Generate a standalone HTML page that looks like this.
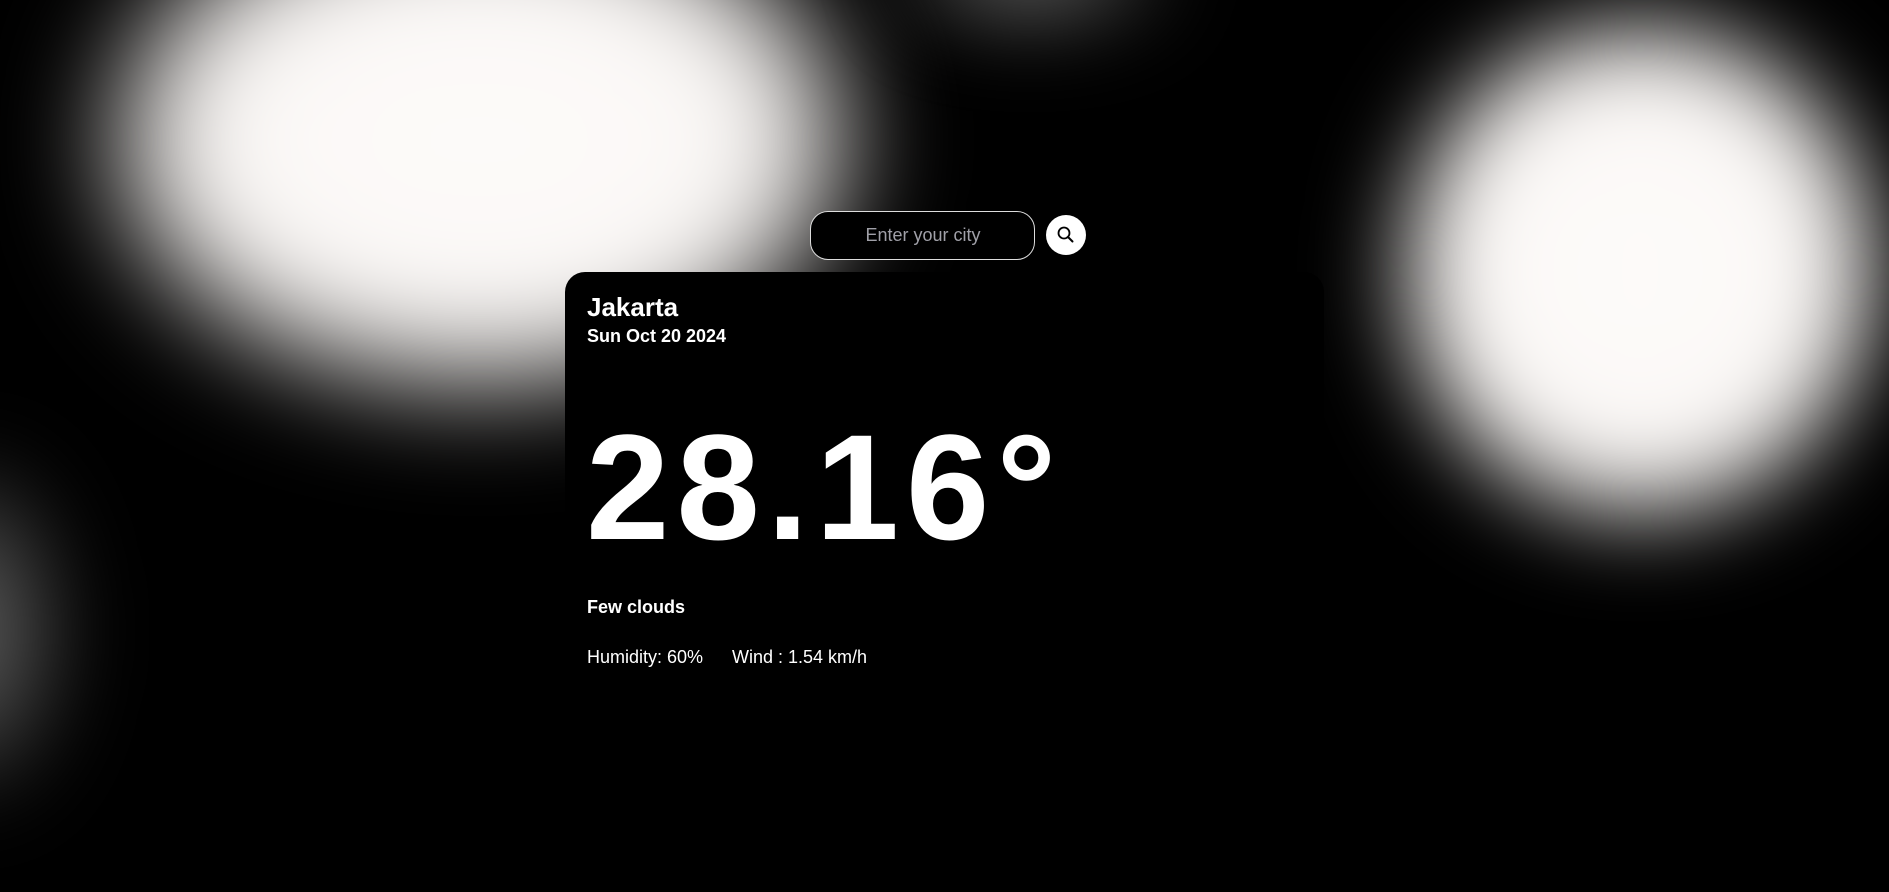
<!DOCTYPE html>
<html><head><meta charset="utf-8">
<style>
html,body{margin:0;padding:0;width:1889px;height:865px;overflow:hidden;background:#000;font-family:"Liberation Sans",sans-serif;color:#fff}
.blob{position:absolute;border-radius:50%}
.t{position:absolute;white-space:nowrap;line-height:1}
</style></head><body>
<div class="blob" style="left:110px;top:-110px;width:740px;height:500px;filter:blur(55px);background:radial-gradient(ellipse at center,#fdfbfa 0%,#fbf8f6 55%,rgba(255,255,255,0) 100%)"></div>
<div class="blob" style="left:1400px;top:20px;width:480px;height:500px;filter:blur(45px);background:radial-gradient(ellipse at center,#fdfbfa 0%,#fbf8f6 55%,rgba(255,255,255,0) 100%)"></div>
<div class="blob" style="left:900px;top:-80px;width:260px;height:100px;filter:blur(45px);background:radial-gradient(ellipse at center,rgba(200,200,200,.7) 0%,rgba(255,255,255,0) 100%)"></div>
<div class="blob" style="left:-120px;top:470px;width:180px;height:320px;filter:blur(45px);background:radial-gradient(ellipse at center,rgba(140,140,140,.8) 0%,rgba(255,255,255,0) 100%)"></div>

<div style="position:absolute;left:565px;top:272px;width:759px;height:620px;background:#000;border-radius:20px"></div>

<div style="position:absolute;left:810px;top:211px;width:223px;height:47px;border:1.5px solid #ddd;border-radius:18px;background:#000"></div>
<div class="t" style="left:810px;width:226px;top:226px;text-align:center;font-size:18px;color:#a0a0a8">Enter your city</div>
<div style="position:absolute;left:1046px;top:215px;width:40px;height:40px;border-radius:50%;background:#fff"></div>
<svg style="position:absolute;left:1054px;top:223px" width="24" height="24" viewBox="0 0 24 24"><circle cx="10" cy="10" r="5.5" fill="none" stroke="#000" stroke-width="1.8"/><line x1="14" y1="14" x2="18.5" y2="18.5" stroke="#000" stroke-width="2" stroke-linecap="round"/></svg>

<div class="t" style="left:587px;top:294px;font-size:26px;font-weight:bold">Jakarta</div>
<div class="t" style="left:587px;top:327px;font-size:18px;font-weight:bold">Sun Oct 20 2024</div>
<div class="t" style="left:586px;top:412px;font-size:150px;font-weight:bold;letter-spacing:7px">28.16°</div>
<div class="t" style="left:587px;top:598px;font-size:18px;font-weight:bold">Few clouds</div>
<div class="t" style="left:587px;top:648px;font-size:18px">Humidity: 60%</div>
<div class="t" style="left:732px;top:648px;font-size:18px">Wind : 1.54 km/h</div>
</body></html>
